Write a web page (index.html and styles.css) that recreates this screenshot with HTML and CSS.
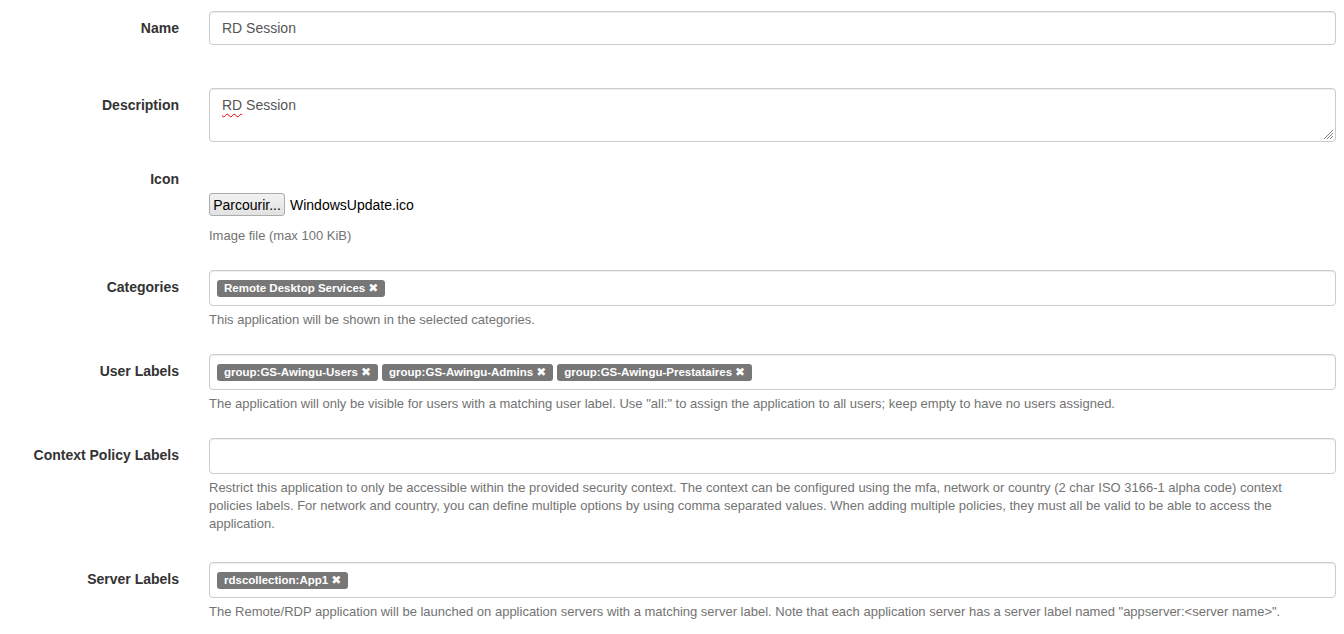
FILE: index.html
```html
<!DOCTYPE html>
<html lang="en">
<head>
    <meta charset="UTF-8">
    <meta name="viewport" content="width=device-width, initial-scale=1.0">
    <title>Edit Application</title>
    <link rel="stylesheet" href="styles.css">
</head>
<body>
    <form class="app-form">
        <div class="form-group group-name">
            <label class="control-label">Name</label>
            <div class="control">
                <div class="form-control">RD Session</div>
            </div>
        </div>

        <div class="form-group group-description">
            <label class="control-label">Description</label>
            <div class="control">
                <div class="form-control textarea"><span class="misspelled">RD</span> Session
                    <svg class="grip" width="12" height="12" viewBox="0 0 12 12">
                        <path d="M11 2 L2 11 M11 5 L5 11 M11 8 L8 11" stroke="#8a8a8a" stroke-width="1"/>
                    </svg>
                </div>
            </div>
        </div>

        <div class="form-group">
            <label class="control-label">Icon</label>
            <div class="control">
                <div class="file-row">
                    <button type="button" class="file-btn">Parcourir...</button>
                    <span class="file-name">WindowsUpdate.ico</span>
                </div>
                <p class="help-block">Image file (max 100 KiB)</p>
            </div>
        </div>

        <div class="form-group">
            <label class="control-label">Categories</label>
            <div class="control">
                <div class="tags-input">
                    <span class="tag">Remote Desktop Services <span class="remove">&#x2716;</span></span>
                </div>
                <p class="help-block">This application will be shown in the selected categories.</p>
            </div>
        </div>

        <div class="form-group">
            <label class="control-label">User Labels</label>
            <div class="control">
                <div class="tags-input">
                    <span class="tag">group:GS-Awingu-Users <span class="remove">&#x2716;</span></span>
                    <span class="tag">group:GS-Awingu-Admins <span class="remove">&#x2716;</span></span>
                    <span class="tag">group:GS-Awingu-Prestataires <span class="remove">&#x2716;</span></span>
                </div>
                <p class="help-block">The application will only be visible for users with a matching user label. Use "all:" to assign the application to all users; keep empty to have no users assigned.</p>
            </div>
        </div>

        <div class="form-group group-context">
            <label class="control-label">Context Policy Labels</label>
            <div class="control">
                <div class="tags-input"></div>
                <p class="help-block">Restrict this application to only be accessible within the provided security context. The context can be configured using the mfa, network or country (2 char ISO 3166-1 alpha code) context policies labels. For network and country, you can define multiple options by using comma separated values. When adding multiple policies, they must all be valid to be able to access the application.</p>
            </div>
        </div>

        <div class="form-group">
            <label class="control-label">Server Labels</label>
            <div class="control">
                <div class="tags-input">
                    <span class="tag">rdscollection:App1 <span class="remove">&#x2716;</span></span>
                </div>
                <p class="help-block">The Remote/RDP application will be launched on application servers with a matching server label. Note that each application server has a server label named "appserver:&lt;server name&gt;".</p>
            </div>
        </div>
    </form>
</body>
</html>
```

FILE: styles.css
```css
* {
    margin: 0;
    padding: 0;
    box-sizing: border-box;
}

body {
    background-color: #fff;
    font-family: "Liberation Sans", Arial, Helvetica, sans-serif;
    font-size: 14px;
    line-height: 20px;
    color: #333;
    overflow: hidden;
}

.app-form {
    padding: 11px 8px 0 0;
}

.form-group {
    display: grid;
    grid-template-columns: 194px 1fr;
    margin-bottom: 15px;
}

.group-name {
    margin-bottom: 43px;
}

.group-description {
    margin-bottom: 20px;
}

.group-context {
    margin-bottom: 19px;
}

.control-label {
    text-align: right;
    font-weight: bold;
    padding: 7px 15px 0 0;
}

.control {
    padding-left: 15px;
    min-width: 0;
}

.form-control {
    height: 34px;
    padding: 6px 12px;
    border: 1px solid #ccc;
    border-radius: 4px;
    box-shadow: inset 0 1px 1px rgba(0, 0, 0, 0.075);
    color: #555;
    background-color: #fff;
}

.textarea {
    position: relative;
    height: 54px;
}

.misspelled {
    text-decoration: underline wavy #e00;
    text-decoration-thickness: 1px;
    text-underline-offset: 3px;
}

.grip {
    position: absolute;
    right: 1px;
    bottom: 1px;
}

.file-row {
    display: flex;
    align-items: center;
    gap: 5px;
    margin: 31px 0 11px;
    color: #000;
}

.file-btn {
    height: 23px;
    width: 76px;
    font-family: inherit;
    font-size: 14px;
    color: #000;
    background: linear-gradient(#f2f2f2, #e2e2e2);
    border: 1px solid #acacac;
    border-radius: 3px;
}

.help-block {
    margin: 5px 0 10px;
    padding-right: 30px;
    font-size: 13px;
    line-height: 18px;
    color: #737373;
}

.tags-input {
    display: flex;
    align-items: center;
    gap: 4px;
    height: 36px;
    padding: 0 7px;
    border: 1px solid #ccc;
    border-radius: 4px;
    box-shadow: inset 0 1px 1px rgba(0, 0, 0, 0.075);
}

.tag {
    display: inline-flex;
    align-items: center;
    gap: 3px;
    height: 17px;
    padding: 0 7px;
    background-color: #777;
    border-radius: 3px;
    color: #fff;
    font-size: 11.5px;
    font-weight: bold;
    white-space: nowrap;
}

.remove {
    font-family: "DejaVu Sans", sans-serif;
    font-size: 12px;
    line-height: 1;
}
```
